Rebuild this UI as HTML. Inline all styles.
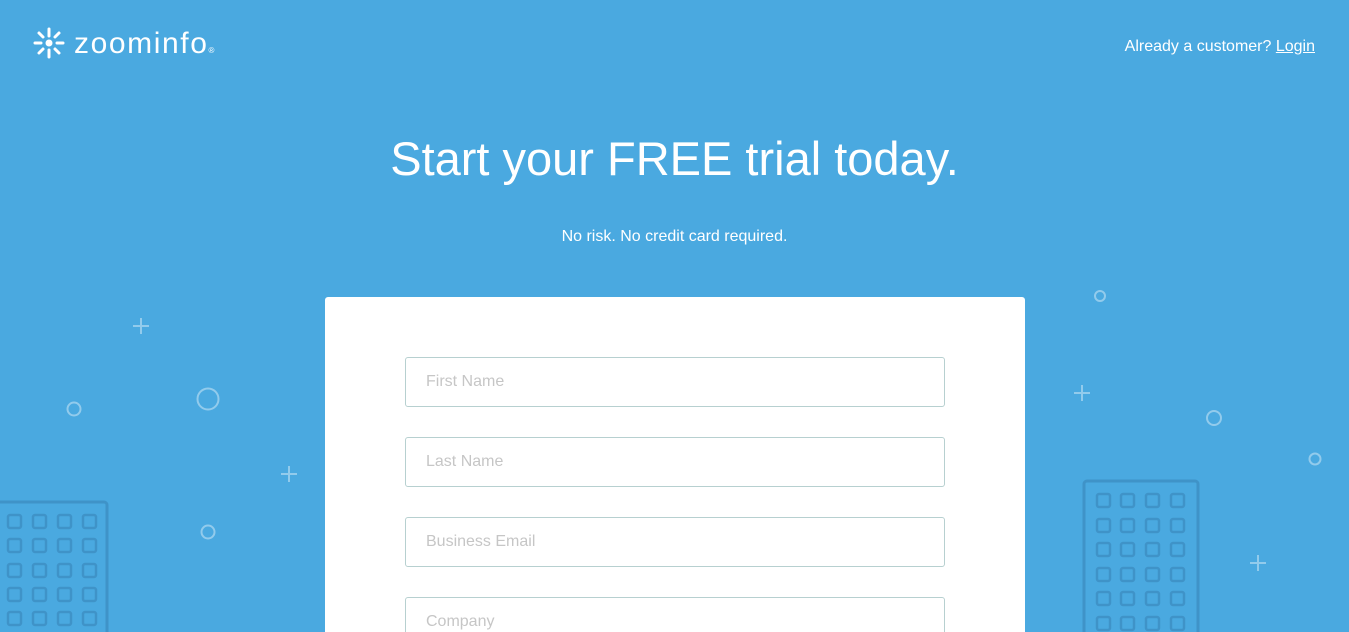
<!DOCTYPE html>
<html style="overflow:hidden;height:632px"><head><style>
html,body{margin:0;width:1349px;height:632px;overflow:hidden}
body{background:#4aa9e0;font-family:"Liberation Sans",sans-serif;position:relative;color:#fff}
.abs{position:absolute}
.logo{left:74px;top:27px;font-size:30px;letter-spacing:1.6px}
.top{right:34px;top:38px;font-size:16px}
.top u{color:#fff}
h1{position:absolute;left:0;width:1349px;text-align:center;top:131px;margin:0;font-weight:300;font-size:47px}
.sub{left:0;width:1349px;text-align:center;top:228px;font-size:16px}
.card{left:325px;top:297px;width:700px;height:335px;background:#fff;border-radius:3px 3px 0 0;overflow:hidden}
.inp{position:absolute;left:80px;border:1px solid #b7d0d0;border-radius:3px;color:#c6c6c6;font-size:16px;line-height:48px;padding-left:20px;box-sizing:border-box;width:540px;height:50px}
</style></head><body>
<svg class="abs" style="left:33px;top:27px" width="34" height="34" viewBox="0 0 34 34" stroke="#fff" stroke-width="3" stroke-linecap="round">
<circle cx="16" cy="16" r="3.5" fill="#fff" stroke="none"/>
<line x1="16" y1="2" x2="16" y2="9"/><line x1="16" y1="23" x2="16" y2="30"/>
<line x1="2" y1="16" x2="8" y2="16"/><line x1="24" y1="16" x2="30" y2="16"/>
<line x1="6" y1="6" x2="10" y2="10"/><line x1="22" y1="22" x2="26" y2="26"/>
<line x1="26" y1="6" x2="22" y2="10"/><line x1="10" y1="22" x2="6" y2="26"/>
</svg>
<div class="abs logo">zoominfo<span style="font-size:8px">®</span></div>
<div class="abs top">Already a customer? <u>Login</u></div>
<h1>Start your FREE trial today.</h1>
<div class="abs sub">No risk. No credit card required.</div>
<svg class="abs" style="left:0;top:0" width="1349" height="632" fill="none">
<g stroke="rgba(255,255,255,0.4)" stroke-width="2">
<path d="M133 326h16M141 318v16M281 474h16M289 466v16M1074 393h16M1082 385v16M1250 563h16M1258 555v16"/>
<circle cx="74" cy="409" r="6.5"/><circle cx="208" cy="399" r="10.5"/><circle cx="208" cy="532" r="6.5"/>
<circle cx="1100" cy="296" r="5"/><circle cx="1214" cy="418" r="7"/><circle cx="1315" cy="459" r="5.5"/>
</g>
<g stroke="#3f93c8" stroke-width="3">
<path d="M-5 502h109a3 3 0 0 1 3 3v130"/>
<path d="M1084 640v-156a3 3 0 0 1 3-3h108a3 3 0 0 1 3 3v156"/>
</g>
<g stroke="#3f93c8" stroke-width="2.5">
<g id="l">
<rect x="8" y="515" width="13" height="13" rx="2"/><rect x="33" y="515" width="13" height="13" rx="2"/><rect x="58" y="515" width="13" height="13" rx="2"/><rect x="83" y="515" width="13" height="13" rx="2"/>
</g>
<use href="#l" y="24"/><use href="#l" y="49"/><use href="#l" y="73"/><use href="#l" y="97"/>
<g id="r">
<rect x="1097" y="494" width="13" height="13" rx="2"/><rect x="1121" y="494" width="13" height="13" rx="2"/><rect x="1146" y="494" width="13" height="13" rx="2"/><rect x="1171" y="494" width="13" height="13" rx="2"/>
</g>
<use href="#r" y="25"/><use href="#r" y="49"/><use href="#r" y="74"/><use href="#r" y="98"/><use href="#r" y="123"/>
</g>
</svg>
<div class="abs card">
<div class="inp" style="top:60px">First Name</div>
<div class="inp" style="top:140px">Last Name</div>
<div class="inp" style="top:220px">Business Email</div>
<div class="inp" style="top:300px">Company</div>
</div>
</body></html>
